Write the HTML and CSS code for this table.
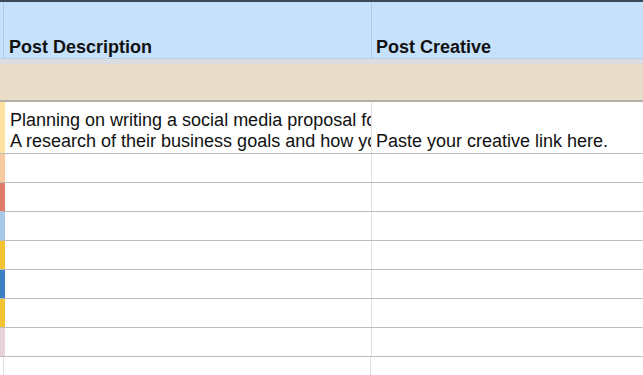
FILE: index.html
```html
<!DOCTYPE html>
<html lang="en">

<head>
    <meta charset="UTF-8">
    <meta name="viewport" content="width=device-width, initial-scale=1.0">
    <title>Content Calendar</title>
    <link rel="stylesheet" href="styles.css">
</head>

<body>
    <div class="sheet">
        <div class="row head">
            <div class="tag"></div>
            <div class="cell col-desc">Post Description</div>
            <div class="cell col-creative">Post Creative</div>
        </div>

        <div class="band"></div>

        <div class="row tall">
            <div class="tag tag-cream"></div>
            <div class="cell col-desc">
                <div>Planning on writing a social media proposal for a client?</div>
                <div>A research of their business goals and how your plan supports them is a must.</div>
            </div>
            <div class="cell col-creative">Paste your creative link here.</div>
        </div>

        <div class="row">
            <div class="tag tag-peach"></div>
            <div class="cell col-desc"></div>
            <div class="cell col-creative"></div>
        </div>
        <div class="row">
            <div class="tag tag-salmon"></div>
            <div class="cell col-desc"></div>
            <div class="cell col-creative"></div>
        </div>
        <div class="row">
            <div class="tag tag-sky"></div>
            <div class="cell col-desc"></div>
            <div class="cell col-creative"></div>
        </div>
        <div class="row">
            <div class="tag tag-gold"></div>
            <div class="cell col-desc"></div>
            <div class="cell col-creative"></div>
        </div>
        <div class="row">
            <div class="tag tag-blue"></div>
            <div class="cell col-desc"></div>
            <div class="cell col-creative"></div>
        </div>
        <div class="row">
            <div class="tag tag-gold"></div>
            <div class="cell col-desc"></div>
            <div class="cell col-creative"></div>
        </div>
        <div class="row">
            <div class="tag tag-pink"></div>
            <div class="cell col-desc"></div>
            <div class="cell col-creative"></div>
        </div>
        <div class="row">
            <div class="tag tag-blank"></div>
            <div class="cell col-desc"></div>
            <div class="cell col-creative"></div>
        </div>
    </div>
</body>

</html>
```

FILE: styles.css
```css
* {
    padding: 0;
    margin: 0;
    box-sizing: border-box;
}

body {
    background: #ffffff;
    font-family: "Liberation Sans", Arial, sans-serif;
    font-size: 18px;
    color: #111111;
    overflow: hidden;
}

.sheet {
    width: 643px;
    border-top: 2px solid #3b4858;
}

.row {
    display: flex;
    height: 29px;
    border-bottom: 1px solid #bdbdbd;
}

.tag {
    flex: 0 0 5px;
}

.cell {
    display: flex;
    flex-direction: column;
    justify-content: flex-end;
    padding: 0 0 2px 4px;
    line-height: 21px;
    white-space: nowrap;
    overflow: hidden;
}

.col-desc {
    flex: 0 0 366px;
    border-left: 1px solid transparent;
}

.col-creative {
    flex: 1;
    border-left: 1px solid #e0e0e0;
}

/* header row */
.head {
    height: 57px;
    background: #c6e1fb;
    border-bottom: 1px solid #b9cfe6;
    font-weight: bold;
}

.head .cell {
    padding-bottom: 0;
}

.head .tag {
    flex: 0 0 4px;
    border-right: 1px solid #afcbe6;
}

.head .col-desc {
    flex: 0 0 367px;
    border-left: 0;
    padding-left: 5px;
}

.head .col-creative {
    border-left-color: #afcbe6;
}

.band {
    height: 43px;
    background: #e8ddc8;
    border-top: 5px solid #d9dde3;
    border-bottom: 2px solid #b5b1a9;
}

.tall {
    height: 52px;
}

.tall .cell {
    padding-bottom: 1px;
}

.tag-cream { background: #fde3a0; }
.tag-peach { background: #f8c99e; }
.tag-salmon { background: #e07c6c; }
.tag-sky { background: #a6c8e9; }
.tag-gold { background: #f1c232; }
.tag-blue { background: #3d80c5; }
.tag-pink { background: #ead2dd; }

.tag-blank {
    flex: 0 0 4px;
    border-right: 1px solid #e0e0e0;
}
```
